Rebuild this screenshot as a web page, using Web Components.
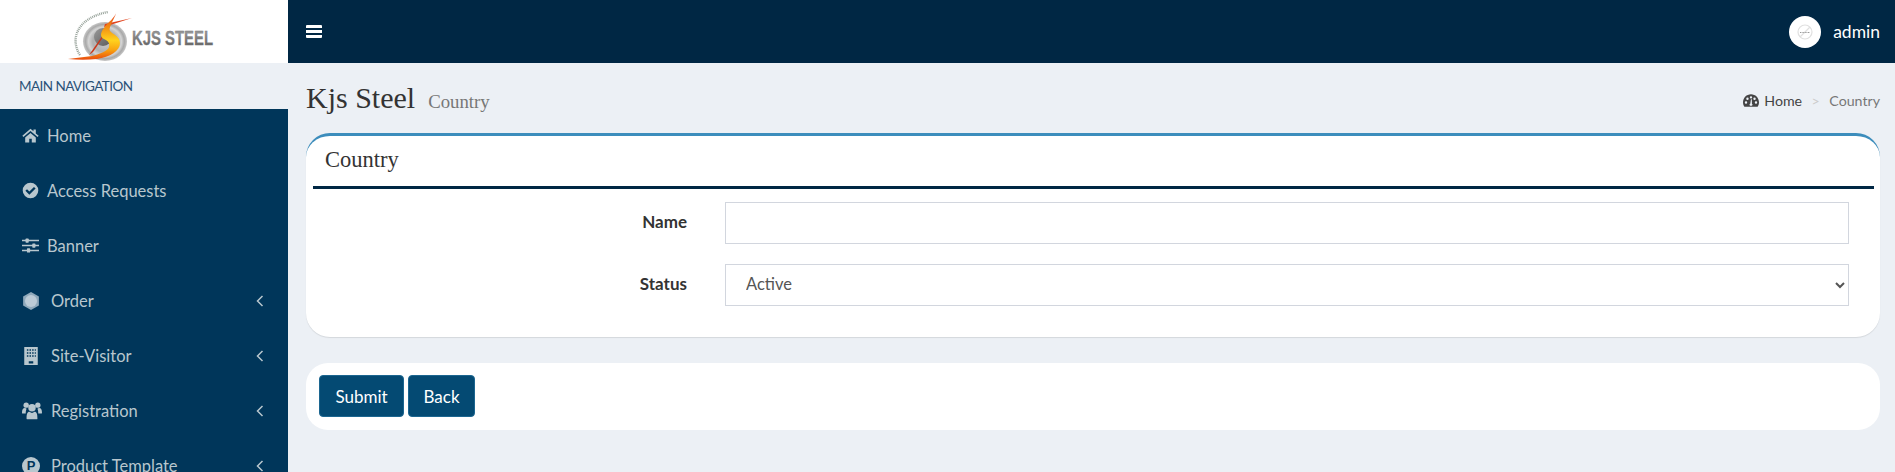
<!DOCTYPE html>
<html lang="en">
<head>
<meta charset="UTF-8">
<title>Kjs Steel - Country</title>
<style>
    html, body { margin: 0; height: 100%; overflow: hidden; }
    body { font-family: Lato, "Noto Sans", sans-serif; background: #ecf0f5; }
</style>
</head>
<body>
<app-shell>
    <app-logo slot="logo"></app-logo>
    <top-bar slot="top" user="admin"></top-bar>
    <side-nav slot="side" heading="MAIN NAVIGATION">
        <nav-item icon="home">Home</nav-item>
        <nav-item icon="check">Access Requests</nav-item>
        <nav-item icon="sliders">Banner</nav-item>
        <nav-item icon="cube" more>Order</nav-item>
        <nav-item icon="building" more>Site-Visitor</nav-item>
        <nav-item icon="users" more>Registration</nav-item>
        <nav-item icon="product" more>Product Template</nav-item>
    </side-nav>
    <page-heading title="Kjs Steel" sub="Country" crumb="Country"></page-heading>
    <box-card heading="Country">
        <form-row label="Name"><input type="text"></form-row>
        <form-row label="Status">
            <select><option>Active</option><option>Inactive</option></select>
        </form-row>
    </box-card>
    <action-card>
        <app-button style="width:85px">Submit</app-button>
        <app-button style="width:67px">Back</app-button>
    </action-card>
</app-shell>

<script>
const ICONS = {
    home: '<path d="M12 2.500.5 12.500l1.500 1.700L12 5.500l10 8.700 1.500-1.700L19.500 9V3.500h-3.300v2.600z"/><path d="M4.500 14.800V22h5.700v-5.500h3.600V22h5.700v-7.200L12 8.300z"/>',
    check: '<path fill-rule="evenodd" d="M12 1a11 11 0 1 0 0 22 11 11 0 0 0 0-22zm-1.600 17-5.600-5.600 2.300-2.300 3.300 3.300 6.500-6.500 2.300 2.300z"/>',
    sliders: '<path d="M0 4h24v2H0zM0 11h24v2H0zM0 18h24v2H0z"/><rect x="5" y="2" width="4.500" height="6" rx="1"/><rect x="14.500" y="9" width="4.500" height="6" rx="1"/><rect x="7" y="16" width="4.500" height="6" rx="1"/>',
    cube: '<path d="M12 0 22.500 6v12L12 24 1.500 18V6z" fill="#8fa9bb"/><circle cx="12" cy="12" r="8" fill="#bccbd6"/>',
    building: '<path fill-rule="evenodd" d="M3 0h18v24H3zM6.500 3v2h2V3zm3.500 0v2h2V3zm3.500 0v2h2V3zM17 3v2h1.500V3zM6.500 7v2h2V7zM10 7v2h2V7zm3.500 0v2h2V7zM17 7v2h1.500V7zM6.500 11v2h2v-2zm3.500 0v2h2v-2zm3.500 0v2h2v-2zm3.500 0v2h1.500v-2zM9 19v3h6v-3z"/>',
    users: '<circle cx="5" cy="5" r="3.200"/><circle cx="19" cy="5" r="3.200"/><circle cx="12" cy="8" r="4.500"/><path d="M0 14c0-3 1-5.500 3.500-5.500.8 0 1.500.5 2 .8-.8 1.500-1 3.700-1 5.700H1.500C.5 15 0 14.700 0 14zM24 14c0-3-1-5.500-3.500-5.500-.8 0-1.500.5-2 .8.800 1.500 1 3.700 1 5.700h3c1 0 1.500-.3 1.500-1zM6 22c-.5 0-.5-.5-.5-1 0-5 .8-8 3.500-8 1 .8 2 1.300 3 1.300s2-.5 3-1.300c2.700 0 3.500 3 3.500 8 0 .5 0 1-.5 1z"/>',
    gauge: '<path fill-rule="evenodd" d="M12 2C5.400 2 0 7.400 0 14c0 2.500.8 4.800 2.100 6.700h19.800C23.200 18.800 24 16.500 24 14c0-6.600-5.400-12-12-12zM4.500 16a1.800 1.800 0 1 1 0-3.600 1.800 1.800 0 0 1 0 3.600zM6.700 10.500a1.800 1.800 0 1 1 0-3.600 1.800 1.800 0 0 1 0 3.600zM12 8.300a1.800 1.800 0 1 1 0-3.600 1.800 1.800 0 0 1 0 3.600zM13.300 19h-2.800a1.700 1.700 0 0 1 .4-3l1-6.500h1.300l.2 6.500a1.700 1.700 0 0 1-.1 3zm4-8.500a1.800 1.800 0 1 1 0-3.600 1.800 1.800 0 0 1 0 3.600zm2.200 5.500a1.800 1.800 0 1 1 0-3.600 1.800 1.800 0 0 1 0 3.600z"/>'
};
const ICON_SIZE = { users: 20, building: 18, cube: 18, check: 17, sliders: 17, home: 17 };

function svgIcon(name, size) {
    return `<svg width="${size}" height="${size}" viewBox="0 0 24 24" fill="currentColor">${ICONS[name]}</svg>`;
}

// small helper so every element below stays a few lines
function define(tag, css, html, after) {
    customElements.define(tag, class extends HTMLElement {
        connectedCallback() {
            if (this.shadowRoot) return;
            this.attachShadow({ mode: 'open' });
            this.shadowRoot.innerHTML = `<style>${css}</style>${typeof html === 'function' ? html(this) : html}`;
            if (after) after(this);
        }
    });
}

define('app-shell', `
    :host { display: grid; grid-template-columns: 288px 1fr; grid-template-rows: 63px 1fr; height: 100vh; overflow: hidden; }
    .main { padding: 0 15px 0 18px; display: flex; flex-direction: column; min-width: 0; }
`, `
    <slot name="logo"></slot>
    <slot name="top"></slot>
    <slot name="side"></slot>
    <div class="main"><slot></slot></div>
`);

define('app-logo', `
    :host { display: block; background: #fff; height: 63px; }
    svg { display: block; }
    text { font-family: "Liberation Sans", sans-serif; font-weight: 700; font-size: 20px; }
`, `
    <svg width="288" height="63" viewBox="0 0 288 63">
        <defs>
            <radialGradient id="disc" cx="50%" cy="50%" r="50%">
                <stop offset="0" stop-color="#cfcfcf"/><stop offset=".55" stop-color="#b0b0b0"/>
                <stop offset=".75" stop-color="#d4d4d4"/><stop offset=".88" stop-color="#a9a9a9"/>
                <stop offset="1" stop-color="#c8c8c8"/>
            </radialGradient>
            <linearGradient id="hub" x1="0" y1="0" x2="1" y2="1">
                <stop offset="0" stop-color="#9a9a9a"/><stop offset="1" stop-color="#5a5a5a"/>
            </linearGradient>
            <linearGradient id="ess" x1="0" y1="0" x2="0" y2="1">
                <stop offset="0" stop-color="#e5311c"/><stop offset=".32" stop-color="#f28a12"/>
                <stop offset=".6" stop-color="#ffd21e"/><stop offset=".8" stop-color="#f9a30f"/><stop offset="1" stop-color="#e84a10"/>
            </linearGradient>
            <linearGradient id="word" x1="0" y1="0" x2="0" y2="1">
                <stop offset="0" stop-color="#a8a8a8"/><stop offset="1" stop-color="#5c5c5c"/>
            </linearGradient>
        </defs>
        <path d="M80 55C70 40 76 18 108 12" fill="none" stroke="#98a39b" stroke-width="2.400" stroke-dasharray="1 .9"/>
        <ellipse cx="105" cy="41.500" rx="22" ry="19.500" fill="url(#disc)"/>
        <circle cx="103" cy="37" r="9" fill="url(#hub)"/>
        <path d="M132 18 105 24l-1 3z" fill="#e0431d"/>
        <path d="M112 22 89 55l4-3 15-22z" fill="#c9371a"/>
        <path d="M117 11c-2 7-9 11-13 17-4 5-4 9 0 11 4 2 6 4 5 8-1 4-9 7-17 9-8 1-16 2-24 3 10 1 20 1 29 0 13-2 23-8 23-16 0-7-8-9-10-12-2-3 3-9 7-20z" fill="url(#ess)"/>
        <text x="132" y="44.500" textLength="81" lengthAdjust="spacingAndGlyphs" fill="url(#word)" stroke="#777" stroke-width=".3">KJS STEEL</text>
    </svg>
`);

define('top-bar', `
    :host { display: flex; align-items: center; justify-content: space-between; background: #002744; color: #fff; padding: 0 15px 0 18px; }
    .burger { display: block; width: 16px; height: 13px; background: linear-gradient(#fff 0 3px, transparent 3px 5px, #fff 5px 8px, transparent 8px 10px, #fff 10px 13px); border-radius: 1px; }
    .user { display: flex; align-items: center; gap: 12px; font-size: 17.500px; }
    .avatar { width: 32px; height: 32px; border-radius: 50%; background: #fff; display: grid; place-items: center; }
`, el => `
    <span class="burger"></span>
    <div class="user">
        <span class="avatar">
            <svg width="18" height="18" viewBox="0 0 18 18" fill="none" stroke="#e0e0e0" stroke-width="1.200"><circle cx="9" cy="9" r="7"/><path d="M4 14 14 4"/><path d="M4 9.500h10" stroke="#999" stroke-dasharray="1 .6"/></svg>
        </span>
        <span>${el.getAttribute('user')}</span>
    </div>
`);

define('side-nav', `
    :host { display: block; min-height: 0; overflow: hidden; }
    .head { height: 46px; display: flex; align-items: center; padding-left: 19px; font-size: 13.500px; letter-spacing: -.55px; color: #2a5278; }
    .menu { background: #00365a; height: 100%; }
`, el => `
    <div class="head">${el.getAttribute('heading')}</div>
    <div class="menu"><slot></slot></div>
`);

define('nav-item', `
    :host { display: flex; align-items: center; height: 55px; padding: 0 0 2px 22px; color: #b8c7ce; font-size: 16.500px; box-sizing: border-box; }
    .ico { display: flex; width: 25px; flex: none; }
    :host([more]) .ico { width: 29px; }
    .chev { margin-left: auto; margin-right: 24px; display: flex; }
    .p { width: 18px; height: 18px; border-radius: 50%; background: #b8c7ce; color: #00365a; font: 700 13px/18px "Liberation Sans", sans-serif; text-align: center; }
`, el => {
    const name = el.getAttribute('icon');
    const icon = name === 'product' ? '<span class="p">P</span>' : svgIcon(name, ICON_SIZE[name]);
    const chev = el.hasAttribute('more')
        ? '<span class="chev"><svg width="8" height="12" viewBox="0 0 8 12" fill="none" stroke="currentColor" stroke-width="1.500"><path d="M6.500 1 1.500 6l5 5"/></svg></span>' : '';
    return `<span class="ico">${icon}</span><slot></slot>${chev}`;
});

define('page-heading', `
    :host { display: flex; align-items: baseline; height: 70px; box-sizing: border-box; padding-top: 17px; font-family: "Liberation Serif", serif; color: #333; }
    h1 { margin: 0; font-weight: 400; font-size: 30px; line-height: 36px; }
    small { font-size: 18.800px; color: #777; margin-left: 13px; }
    ol { list-style: none; display: flex; align-items: center; margin: 0 0 0 auto; padding: 0; font: 14.200px Lato, "Noto Sans", sans-serif; color: #777; align-self: center; position: relative; top: -6px; }
    li { display: flex; align-items: center; }
    .home { color: #444; gap: 5px; }
    .sep { color: #ccc; margin: 0 9.500px; }
`, el => `
    <h1>${el.getAttribute('title')}</h1><small>${el.getAttribute('sub')}</small>
    <ol>
        <li class="home">${svgIcon('gauge', 16)}Home</li>
        <li class="sep">&gt;</li>
        <li>${el.getAttribute('crumb')}</li>
    </ol>
`);

define('box-card', `
    :host { display: block; height: 204px; box-sizing: border-box; background: #fff; border-top: 3px solid #3c8dbc; border-radius: 24px; box-shadow: 0 1px 1px rgba(0,0,0,.1); }
    h3 { margin: 0 6px 13px 7px; padding-left: 12px; height: 53px; box-sizing: border-box; border-bottom: 3px solid #002744; font: 400 22.500px/47px "Liberation Serif", serif; color: #333; }
    .rows { display: flex; flex-direction: column; gap: 20px; padding-right: 31px; }
`, el => `
    <h3>${el.getAttribute('heading')}</h3>
    <div class="rows"><slot></slot></div>
`);

define('form-row', `
    :host { display: grid; grid-template-columns: 381px 1fr; column-gap: 38px; align-items: center; }
    label { justify-self: end; margin-bottom: 4px; font-weight: 700; font-size: 17px; color: #333; }
    ::slotted(input), ::slotted(select) { width: 100%; height: 42px; box-sizing: border-box; border: 1px solid #d2d6de; border-radius: 0; background: #fff; color: #555; padding: 0 16px 2px; font: 16.500px Lato, "Noto Sans", sans-serif; outline: 0; }
`, el => `<label>${el.getAttribute('label')}</label><slot></slot>`);

define('action-card', `
    :host { display: flex; gap: 4px; margin-top: 26px; padding: 12px 13px 13px; background: #fff; border-radius: 22px; }
`, '<slot></slot>');

define('app-button', `
    :host { display: inline-flex; align-items: center; justify-content: center; height: 42px; box-sizing: border-box; background: #044a73; border: 1px solid #1c6690; border-radius: 4px; color: #fff; font-size: 17px; cursor: pointer; }
`, '<slot></slot>');
</script>
</body>
</html>
